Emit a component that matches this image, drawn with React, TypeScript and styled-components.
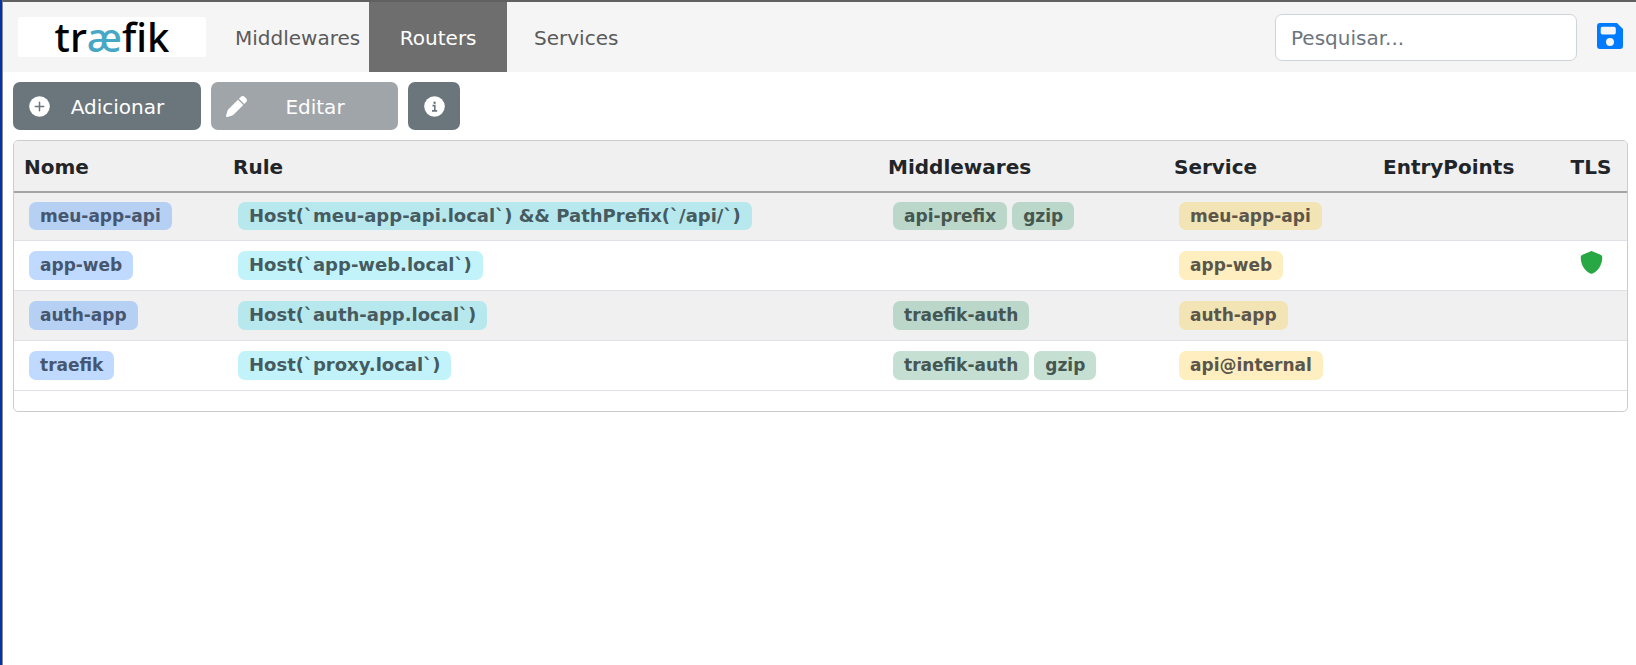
import React from "react";
import styled, { createGlobalStyle } from "styled-components";
import { FaPen, FaShield } from "react-icons/fa6";

const GlobalStyle = createGlobalStyle`
  *, *::before, *::after { box-sizing: border-box; }
  body {
    margin: 0;
    background: #fff;
    color: #212529;
    font-family: Verdana, "DejaVu Sans", sans-serif;
    font-size: 20px;
    line-height: 30px;
  }
  button, input { font: inherit; }
`;

const Page = styled.div`
  min-height: 100vh;
  border-left: 2px solid #0432a8;
`;

const Frame = styled.div`
  min-height: 100vh;
  border-left: 1px solid #8a8a90;
  border-top: 2px solid #606060;
`;

const Navbar = styled.header`
  display: flex;
  align-items: center;
  height: 70px;
  padding: 0 13px 0 15px;
  background: #f5f5f5;
`;

const Logo = styled.a`
  display: flex;
  align-items: center;
  justify-content: center;
  width: 188px;
  height: 40px;
  margin-right: 20px;
  border-radius: 2px;
  background: #fff;
  color: #000;
  font-family: "Noto Sans", sans-serif;
  font-size: 40px;
  font-weight: 500;
  line-height: 40px;
  text-decoration: none;
`;

const LogoAccent = styled.span`
  color: #46a8c4;
`;

const Nav = styled.nav`
  display: flex;
  align-self: stretch;
  flex: 1;
`;

const NavLink = styled.a<{ $active?: boolean }>`
  display: flex;
  align-items: center;
  justify-content: center;
  min-width: 138px;
  padding: 2px 9px 0;
  background: ${(p) => (p.$active ? "#6e6e6e" : "transparent")};
  color: ${(p) => (p.$active ? "#fff" : "#5a5a5a")};
  text-decoration: none;
`;

const Search = styled.input`
  width: 302px;
  height: 47px;
  padding: 2px 15px 0;
  border: 1px solid #ced4da;
  border-radius: 7px;
  background: #fff;
  color: #495057;
  &::placeholder { color: #6c757d; opacity: 1; }
`;

const SaveButton = styled.button`
  display: flex;
  margin-left: 20px;
  padding: 0 0 2px;
  border: 0;
  background: none;
  color: #007bff;
`;

const Toolbar = styled.div`
  display: flex;
  gap: 10px;
  padding: 10px;
`;

const ToolButton = styled.button<{ $wide?: boolean }>`
  display: flex;
  align-items: center;
  justify-content: center;
  width: ${(p) => (p.$wide ? "188px" : "52px")};
  height: 48px;
  padding: 0 ${(p) => (p.$wide ? "16px" : "0")};
  border: 0;
  border-radius: 7px;
  background: #6b757c;
  color: #fff;
  &:disabled { width: 187px; padding: 0 15px; background: #a0a5a9; }
  svg { flex: none; width: 21px; height: 21px; }
`;

const ButtonLabel = styled.span`
  flex: 1;
  padding-top: 2px;
  text-align: center;
`;

const Panel = styled.main`
  margin: 0 8px 0 10px;
  padding-bottom: 20px;
  border: 1px solid #cacccd;
  border-radius: 5px;
  overflow: hidden;
`;

const Table = styled.table`
  width: 100%;
  border-spacing: 0;
  table-layout: fixed;
`;

const HeadCell = styled.th<{ $width?: number; $center?: boolean }>`
  width: ${(p) => (p.$width ? `${p.$width}px` : "auto")};
  height: 52px;
  padding: 1px 10px 0;
  border-bottom: 2px solid #a4a4a4;
  background: #f0f0f0;
  text-align: ${(p) => (p.$center ? "center" : "left")};
`;

const Row = styled.tr`
  &:nth-child(odd) { background: #f0f0f0; }
`;

const Cell = styled.td<{ $center?: boolean }>`
  height: 50px;
  padding: 0 ${(p) => (p.$center ? "10px" : "15px")};
  border-bottom: 1px solid #dee2e6;
  text-align: ${(p) => (p.$center ? "center" : "left")};
  ${Row}:first-child & {
    height: 48px;
    padding-bottom: 2px;
  }
`;

const Tags = styled.div`
  display: flex;
  gap: 5px;
`;

const tones = {
  name: ["#c0d9ff", "#b6d0f3", "#46566e"],
  rule: ["#c2f3fb", "#b7e8ee", "#465b60"],
  middleware: ["#c5e0d3", "#bad7ca", "#465650"],
  service: ["#ffeebf", "#f3e4b5", "#5c564a"],
};

const Tag = styled.span<{ $tone: keyof typeof tones }>`
  height: 29px;
  padding: 0 11px;
  border-radius: 7px;
  background: ${(p) => tones[p.$tone][0]};
  color: ${(p) => tones[p.$tone][2]};
  font-size: ${(p) => (p.$tone === "rule" ? "18px" : "17px")};
  font-weight: 700;
  line-height: 28px;
  white-space: nowrap;
  ${Row}:nth-child(odd) & { background: ${(p) => tones[p.$tone][1]}; }
  ${Row}:first-child & { height: 28px; }
`;

const TlsMark = styled.span`
  display: flex;
  justify-content: center;
  padding-bottom: 6px;
  color: #28a745;
  svg { width: 23px; height: 23px; }
`;

const PlusIcon = () => (
  <svg viewBox="0 0 21 21" aria-hidden="true">
    <circle cx="10.5" cy="10.5" r="10.3" fill="currentColor" />
    <path d="M10.5 6.3v8.4M6.3 10.5h8.4" stroke="#6b757c" strokeWidth="1.5" strokeLinecap="round" />
  </svg>
);

const InfoIcon = () => (
  <svg viewBox="0 0 21 21" aria-hidden="true">
    <circle cx="10.5" cy="10.5" r="10.3" fill="currentColor" />
    <circle cx="10.6" cy="6.7" r="1.2" fill="#6b757c" />
    <path d="M8.5 9.6h2.3v5M8 14.9h5.2" fill="none" stroke="#6b757c" strokeWidth="1.6" />
  </svg>
);

const SaveIcon = () => (
  <svg width="26" height="26" viewBox="0 0 26 26" aria-hidden="true">
    <path
      fill="currentColor"
      fillRule="evenodd"
      d="M3 0h17l6 6v17a3 3 0 0 1-3 3H3a3 3 0 0 1-3-3V3a3 3 0 0 1 3-3zM5.5 3.7A1.8 1.8 0 0 0 3.7 5.500v4.200a1.800 1.800 0 0 0 1.800 1.800h11.500a1.800 1.800 0 0 0 1.800-1.800V5.500A1.800 1.800 0 0 0 17 3.700zM13 15a4 4 0 1 0 0 8 4 4 0 0 0 0-8z"
    />
  </svg>
);

interface Router {
  name: string;
  rule: string;
  middlewares: string[];
  service: string;
  tls?: boolean;
}

const routers: Router[] = [
  {
    name: "meu-app-api",
    rule: "Host(`meu-app-api.local`) && PathPrefix(`/api/`)",
    middlewares: ["api-prefix", "gzip"],
    service: "meu-app-api",
  },
  { name: "app-web", rule: "Host(`app-web.local`)", middlewares: [], service: "app-web", tls: true },
  { name: "auth-app", rule: "Host(`auth-app.local`)", middlewares: ["traefik-auth"], service: "auth-app" },
  { name: "traefik", rule: "Host(`proxy.local`)", middlewares: ["traefik-auth", "gzip"], service: "api@internal" },
];

export default function App() {
  return (
    <Page>
      <GlobalStyle />
      <Frame>
        <Navbar>
          <Logo href="#">
            tr<LogoAccent>æ</LogoAccent>fik
          </Logo>
          <Nav>
            <NavLink href="#middlewares">Middlewares</NavLink>
            <NavLink href="#routers" $active aria-current="page">Routers</NavLink>
            <NavLink href="#services">Services</NavLink>
          </Nav>
          <Search type="text" placeholder="Pesquisar..." aria-label="Pesquisar" />
          <SaveButton type="button" aria-label="Salvar">
            <SaveIcon />
          </SaveButton>
        </Navbar>
        <Toolbar>
          <ToolButton type="button" $wide>
            <PlusIcon />
            <ButtonLabel>Adicionar</ButtonLabel>
          </ToolButton>
          <ToolButton type="button" $wide disabled>
            <FaPen />
            <ButtonLabel>Editar</ButtonLabel>
          </ToolButton>
          <ToolButton type="button" aria-label="Informações">
            <InfoIcon />
          </ToolButton>
        </Toolbar>
        <Panel>
          <Table>
            <thead>
              <tr>
                <HeadCell $width={209}>Nome</HeadCell>
                <HeadCell>Rule</HeadCell>
                <HeadCell $width={286}>Middlewares</HeadCell>
                <HeadCell $width={209}>Service</HeadCell>
                <HeadCell $width={182}>EntryPoints</HeadCell>
                <HeadCell $width={72} $center>TLS</HeadCell>
              </tr>
            </thead>
            <tbody>
              {routers.map((r) => (
                <Row key={r.name}>
                  <Cell><Tags><Tag $tone="name">{r.name}</Tag></Tags></Cell>
                  <Cell><Tags><Tag $tone="rule">{r.rule}</Tag></Tags></Cell>
                  <Cell>
                    <Tags>
                      {r.middlewares.map((m) => <Tag key={m} $tone="middleware">{m}</Tag>)}
                    </Tags>
                  </Cell>
                  <Cell><Tags><Tag $tone="service">{r.service}</Tag></Tags></Cell>
                  <Cell />
                  <Cell $center>
                    {r.tls && <TlsMark role="img" aria-label="TLS"><FaShield /></TlsMark>}
                  </Cell>
                </Row>
              ))}
            </tbody>
          </Table>
        </Panel>
      </Frame>
    </Page>
  );
}
